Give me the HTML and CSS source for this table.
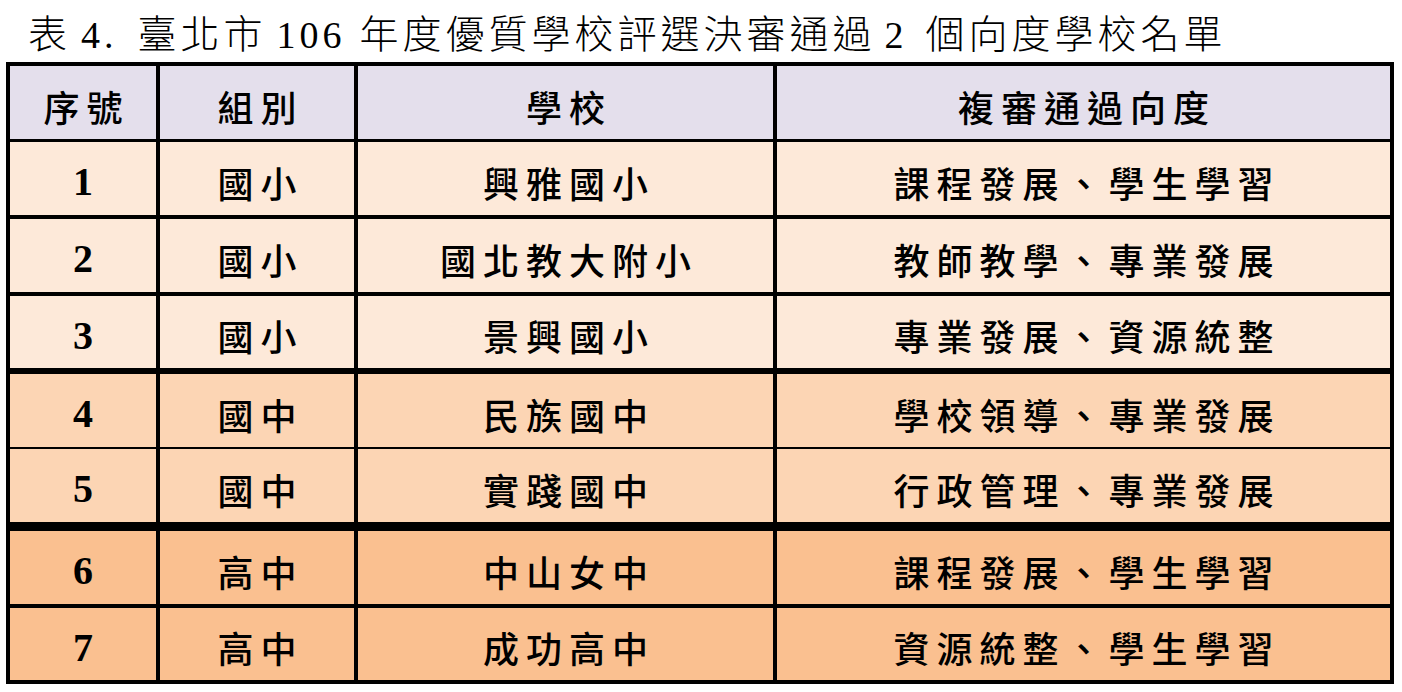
FILE: index.html
```html
<!DOCTYPE html>
<html lang="zh-Hant">
<head>
<meta charset="utf-8">
<title>臺北市 106 年度優質學校評選決審通過 2 個向度學校名單</title>
<link rel="stylesheet" href="styles.css">
</head>
<body>
<div class="page">
  <div class="title">表<span class="lat l1">4.</span>臺北市<span class="lat l2">106</span>年度優質學校評選決審通過<span class="lat l3">2</span>個向度學校名單</div>
  <div class="tbl">
    <div class="row head">
      <div class="cell">序號</div>
      <div class="cell">組別</div>
      <div class="cell">學校</div>
      <div class="cell">複審通過向度</div>
    </div>
    <div class="row light r1">
      <div class="cell num">1</div>
      <div class="cell">國小</div>
      <div class="cell">興雅國小</div>
      <div class="cell">課程發展、學生學習</div>
    </div>
    <div class="row light r2">
      <div class="cell num">2</div>
      <div class="cell">國小</div>
      <div class="cell">國北教大附小</div>
      <div class="cell">教師教學、專業發展</div>
    </div>
    <div class="row light r3">
      <div class="cell num">3</div>
      <div class="cell">國小</div>
      <div class="cell">景興國小</div>
      <div class="cell">專業發展、資源統整</div>
    </div>
    <div class="row mid r4">
      <div class="cell num">4</div>
      <div class="cell">國中</div>
      <div class="cell">民族國中</div>
      <div class="cell">學校領導、專業發展</div>
    </div>
    <div class="row mid r5">
      <div class="cell num">5</div>
      <div class="cell">國中</div>
      <div class="cell">實踐國中</div>
      <div class="cell">行政管理、專業發展</div>
    </div>
    <div class="row dark r6">
      <div class="cell num">6</div>
      <div class="cell">高中</div>
      <div class="cell">中山女中</div>
      <div class="cell">課程發展、學生學習</div>
    </div>
    <div class="row dark r7">
      <div class="cell num">7</div>
      <div class="cell">高中</div>
      <div class="cell">成功高中</div>
      <div class="cell">資源統整、學生學習</div>
    </div>
  </div>
</div>
</body>
</html>
```

FILE: styles.css
```css
body {
  margin: 0;
  background: #ffffff;
  color: #000000;
}

.page {
  padding: 0 0 0 6px;
  width: 1388px;
}

.title {
  height: 62px;
  box-sizing: border-box;
  padding: 15px 0 0 22px;
  font-family: "Liberation Serif", "Noto Sans CJK TC", serif;
  font-weight: 300;
  font-size: 39px;
  line-height: 39px;
  letter-spacing: 4px;
  white-space: nowrap;
}

.lat {
  font-size: 38px;
  font-weight: 400;
}

.l1 { margin: 0 20px 0 10px; }
.l2 { margin: 0 14px 0 10px; }
.l3 { margin: 0 18px 0 9px; }

.tbl {
  width: 1388px;
  box-sizing: border-box;
  border: 4px solid #000000;
}

.row {
  display: grid;
  grid-template-columns: 150px 198px 419px 613px;
  box-sizing: border-box;
  border-bottom: 4px solid #000000;
}

.head { background: #e4dfec; height: 76px; border-bottom-width: 3px; }
.light { background: #fde9d9; }
.mid { background: #fcd5b4; }
.dark { background: #fac090; }

.r1, .r2 { height: 77px; }
.r3 { height: 78px; border-bottom-width: 6px; }
.r4 { height: 75px; border-bottom-width: 2px; }
.r5 { height: 82px; border-bottom-width: 9px; }
.r6 { height: 77px; }
.r7 { height: 72px; border-bottom: 0; }

.cell {
  display: flex;
  align-items: center;
  justify-content: center;
  box-sizing: border-box;
  border-right: 4px solid #000000;
  padding: 6px 0 0 7px;
  font-family: "Noto Sans CJK TC", sans-serif;
  font-weight: 500;
  font-size: 36px;
  letter-spacing: 7px;
  white-space: nowrap;
}

.cell:last-child {
  border-right: 0;
}

.cell.num {
  padding-left: 0;
  font-family: "Liberation Serif", serif;
  font-weight: 700;
  font-size: 40px;
  letter-spacing: 0;
}
```
